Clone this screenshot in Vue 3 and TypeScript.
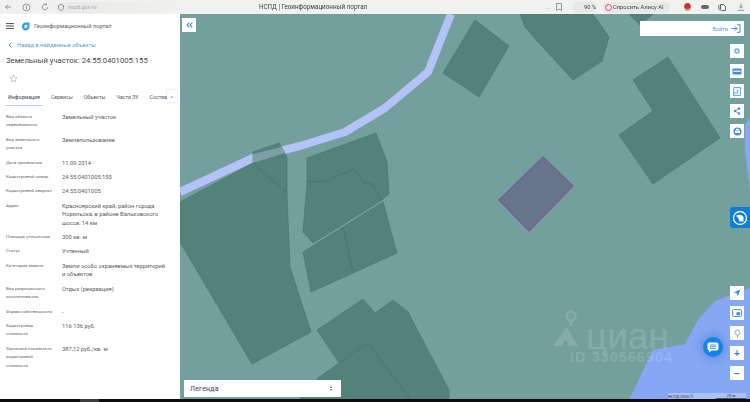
<script setup lang="ts">
const tabs = ['Информация', 'Сервисы', 'Объекты', 'Части ЗУ', 'Состав'];

// переносы строк как на исходном экране
const rows: Array<{ label: string; value: string }> = [
  { label: 'Вид объекта\nнедвижимости', value: 'Земельный участок' },
  { label: 'Вид земельного\nучастка', value: 'Землепользование' },
  { label: 'Дата присвоения', value: '11.09.2014' },
  { label: 'Кадастровый номер', value: '24:55:0401005:155' },
  { label: 'Кадастровый квартал', value: '24:55:0401005' },
  { label: 'Адрес', value: 'Красноярский край, район города\nНорильска, в районе Вальковского\nшоссе, 14 км' },
  { label: 'Площадь уточненная', value: '300 кв. м' },
  { label: 'Статус', value: 'Учтенный' },
  { label: 'Категория земель', value: 'Земли особо охраняемых территорий\nи объектов' },
  { label: 'Вид разрешенного\nиспользования', value: 'Отдых (рекреация)' },
  { label: 'Форма собственности', value: '-' },
  { label: 'Кадастровая\nстоимость', value: '116 136 руб.' },
  { label: 'Удельный показатель\nкадастровой\nстоимости', value: '387,12 руб./кв. м' },
];

const plots = [
  '180,202 253,163 287,193 290,267 311,332 252,364 180,242',
  '253,152 279,143 287,157 287,193 253,163',
  '307,158 376,133 387,162 389,194 382,200 372,184 365,184 353,169 327,181 307,182',
  '307,182 327,181 353,169 365,184 372,184 382,200 313,243 303,232',
  '343,227 383,202 397,253 353,273',
  '303,252 343,227 353,273 311,292',
  '317,330 363,299 375,313 393,300 408,312 449,390 449,402 412,402 368,343 339,363',
  '339,363 368,343 412,402 297,402 318,378',
  '475,20 509,46 479,97 443,73',
  '520,14 593,14 609,37 602,61 573,80 538,42 525,27',
  '629,14 653,14 640,25',
  '668,57 720,138 653,184 619,135 653,111 633,80',
];
</script>

<template>
  <div class="page">
    <header class="browser">
      <div class="browser-left">
        <svg width="8" height="8" viewBox="0 0 8 8"><path d="M7 4H1.500M4 1.500 1.500 4 4 6.500" class="ico-grey" /></svg>
        <svg width="9" height="9" viewBox="0 0 9 9"><circle cx="4.500" cy="4.500" r="3.500" class="ico-grey" /><path d="M4.500 2.500v4" class="ico-grey" /></svg>
        <svg width="8" height="8" viewBox="0 0 8 8"><path d="M6.800 4A2.800 2.800 0 1 1 5.500 1.600M5.500 .3v1.600H3.900" class="ico-grey" /></svg>
        <div class="address">
          <svg width="6" height="7" viewBox="0 0 6 7"><path d="M3 .5 5.500 1.500V4C5.500 5.300 4 6.200 3 6.500 2 6.200 .5 5.300 .5 4V1.500Z" class="ico-grey" /></svg>
          <span>nspd.gov.ru</span>
        </div>
      </div>
      <div class="browser-title">НСПД | Геоинформационный портал</div>
      <div class="browser-right">
        <span class="dots">···</span>
        <svg width="6" height="8" viewBox="0 0 6 8"><path d="M.5 .5h5v7L3 6 .5 7.500Z" class="ico-grey" /></svg>
        <div class="pill zoom-pill">
          <svg width="7" height="7" viewBox="0 0 7 7"><circle cx="4" cy="3" r="2.300" class="ico-dark" /><path d="M2.400 4.700.6 6.500" class="ico-dark" /></svg>
          <span>90 %</span>
        </div>
        <div class="pill alice-pill">
          <span class="alice-ring"></span>
          <span>Спросить Алису AI</span>
        </div>
        <span class="ext-red"></span>
        <span class="ext-dark"></span>
        <svg width="8" height="8" viewBox="0 0 8 8"><path d="M2.500 1.500h3l2 2v4h-4l-1-1zM.8 2v4l1.500 1.300" class="ico-dark" /></svg>
        <svg width="8" height="8" viewBox="0 0 8 8"><path d="M4 .5v4.500M2.200 3.400 4 5.200 5.800 3.400M1 7.300h6" class="ico-grey" /></svg>
      </div>
    </header>

    <main class="main">
      <aside class="panel">
        <div class="panel-head">
          <svg width="8" height="6" viewBox="0 0 8 6"><path d="M0 .6h8M0 3h8M0 5.400h8" stroke="#4a4f55" stroke-width="1" fill="none" /></svg>
          <svg width="9" height="9" viewBox="0 0 9 9">
            <path d="M1 4.500 C1 2 2.800 .6 5 .6H8.500V4.500C8.500 6.800 6.800 8.500 4.700 8.500 2.600 8.500 1 6.800 1 4.500Z" fill="#2aa3dc" />
            <path d="M3.200 4.500C3.200 3.400 4 2.800 5 2.800H6.500V4.500C6.500 5.500 5.800 6.200 4.800 6.200S3.200 5.500 3.200 4.500Z" fill="#d9f0fa" />
          </svg>
          <span class="portal">Геоинформационный портал</span>
        </div>

        <a class="back">
          <svg width="4" height="6" viewBox="0 0 4 6"><path d="M3.300 .7 1 3 3.300 5.300" stroke="#3f8fd6" stroke-width="1" fill="none" /></svg>
          <span>Назад в найденные объекты</span>
        </a>

        <h1 class="title">Земельный участок: 24:55:0401005:155</h1>

        <svg class="star" width="9" height="9" viewBox="0 0 9 9">
          <path d="M4.500 .8 5.600 3.200 8.200 3.500 6.300 5.300 6.800 7.900 4.500 6.600 2.200 7.900 2.700 5.300 .8 3.500 3.400 3.200Z" stroke="#a9adb1" stroke-width=".7" fill="none" />
        </svg>

        <nav class="tabs">
          <span v-for="(tab, i) in tabs" :key="tab" class="tab" :class="{ active: i === 0 }">{{ tab }}</span>
          <span class="tab-more">▸</span>
        </nav>

        <dl class="props">
          <div v-for="row in rows" :key="row.label" class="prop">
            <dt>{{ row.label }}</dt>
            <dd>{{ row.value }}</dd>
          </div>
        </dl>
      </aside>

      <section class="map">
        <svg class="map-canvas" width="570" height="388" viewBox="180 14 570 388">
          <rect x="180" y="14" width="570" height="388" fill="#739f9d" />
          <path d="M750 117 745 125 745 150 750 192ZM628 402 653 350 685 344 698 320 715 301 750 288V402Z" fill="#86a8f4" />
          <path d="M180 192 253 158 300 146 345 132 385 108 428 72 451 14" fill="none" stroke="#b3c3f7" stroke-width="8" stroke-linejoin="round" />
          <polygon v-for="p in plots" :key="p" :points="p" fill="#4f7f76" fill-opacity=".92" stroke="#47736b" stroke-width=".6" />
          <polygon points="253,154 282,147 285,153 253,163" fill="#7d9ea5" />
          <polygon points="543,157 573,186 529,231 499,200" fill="#66748c" stroke="#7b5a9a" stroke-width="1.200" />
        </svg>

        <button class="collapse">
          <svg width="7" height="6" viewBox="0 0 7 6"><path d="M3.300 .6 1 3 3.300 5.400M6.300 .6 4 3 6.300 5.400" stroke="#3f8fd6" stroke-width="1.100" fill="none" /></svg>
        </button>

        <div class="login">
          <span>Войти</span>
          <svg width="10" height="9" viewBox="0 0 10 9"><path d="M.5 4.500H6M4 2.500l2 2-2 2M6 .7h3v7.600H6" stroke="#3f8fd6" stroke-width="1" fill="none" /></svg>
        </div>

        <div class="tools tools-top">
          <button class="tool"><svg width="8" height="8" viewBox="0 0 8 8"><circle cx="4" cy="4" r="2.800" fill="#7fb0de" /><circle cx="4" cy="4" r="1" fill="#fff" /></svg></button>
          <button class="tool"><svg width="10" height="7" viewBox="0 0 10 7"><rect x=".5" y=".5" width="9" height="6" rx="1" fill="#3f8fd6" /><rect x="1.500" y="2.500" width="7" height="1.500" fill="#d8e8f6" /></svg></button>
          <button class="tool"><svg width="8" height="9" viewBox="0 0 8 9"><path d="M.5 .5h7v8h-7zM.5 6h4V3" stroke="#5da0dc" stroke-width=".9" fill="#e6f0f9" /></svg></button>
          <button class="tool"><svg width="8" height="8" viewBox="0 0 8 8"><path d="M6 1.500 2 4 6 6.500" stroke="#3f8fd6" stroke-width=".8" fill="none" /><circle cx="6" cy="1.500" r="1.200" fill="#3f8fd6" /><circle cx="2" cy="4" r="1.200" fill="#3f8fd6" /><circle cx="6" cy="6.500" r="1.200" fill="#3f8fd6" /></svg></button>
          <button class="tool"><svg width="9" height="9" viewBox="0 0 9 9"><circle cx="4.500" cy="4.500" r="4" fill="#3f8fd6" /><rect x="2" y="3.500" width="5" height="2.500" fill="#fff" /><rect x="3" y="1.800" width="3" height="1.200" fill="#fff" /></svg></button>
        </div>

        <div class="tab-blue">
          <svg width="16" height="16" viewBox="0 0 16 16"><circle cx="8" cy="8" r="6.500" fill="#0d7ed9" stroke="#fff" stroke-width="1.300" /><path d="M4 6C6 4 10 4.500 11.500 7V11.500H7.500C7 9 6 7 4 6Z" fill="#fff" /></svg>
        </div>

        <div class="watermark">
          <svg class="wm-logo" width="26" height="40" viewBox="0 0 26 40">
            <circle cx="19" cy="6" r="4.500" fill="none" stroke="#fff" stroke-width="2.500" />
            <path d="M19 11 19 16" stroke="#fff" stroke-width="2.500" />
            <path d="M1 36 15 17 26 36 17 36 14 30 9 36Z" fill="#fff" />
          </svg>
          <span class="wm-name">циан</span>
          <div class="wm-id">ID 330566904</div>
        </div>

        <button class="chat">
          <svg width="12" height="11" viewBox="0 0 12 11"><path d="M2.500 .5h7a2 2 0 0 1 2 2v4a2 2 0 0 1-2 2H4.500L2 10.500V8.500A2 2 0 0 1 .5 6.500v-4a2 2 0 0 1 2-2Z" fill="#fff" /><path d="M3 3h6M3 4.700h6M3 6.400h6" stroke="#1186e4" stroke-width=".8" /></svg>
        </button>

        <div class="tools tools-bottom">
          <button class="tool"><svg width="8" height="8" viewBox="0 0 8 8"><path d="M7.500 .5 .7 3.300 3.700 4.300 4.700 7.300Z" fill="#3f8fd6" /></svg></button>
          <button class="tool"><svg width="10" height="8" viewBox="0 0 10 8"><rect x=".6" y=".6" width="8.800" height="6.800" rx=".8" stroke="#3f8fd6" stroke-width="1" fill="none" /><rect x="4.500" y="3.200" width="3.500" height="3" fill="#3f8fd6" /></svg></button>
          <button class="tool"><svg width="7" height="9" viewBox="0 0 7 9"><circle cx="3.500" cy="3.500" r="2.600" stroke="#7fb0de" stroke-width="1" fill="none" /><path d="M3.500 6v2.500" stroke="#7fb0de" stroke-width="1" /></svg></button>
          <button class="tool tool-sign">+</button>
          <button class="tool tool-sign">−</button>
        </div>

        <div class="attribution">
          <span>НСПД 2026 ©</span>
          <span class="scale">20 м</span>
        </div>

        <div class="legend">
          <span>Легенда</span>
          <span class="legend-arrows">
            <i class="up"></i>
            <i class="down"></i>
          </span>
        </div>
      </section>
    </main>
    <footer class="taskbar"><span class="taskbar-item"></span></footer>
  </div>
</template>

<style>
html,
body {
  margin: 0;
  overflow: hidden;
}
</style>

<style scoped>
.page {
  width: 750px;
  height: 402px;
  display: flex;
  flex-direction: column;
  font-family: Roboto, "Liberation Sans", sans-serif;
  color: #4a4f55;
  overflow: hidden;
  filter: blur(0.35px);
}
.ico-grey {
  fill: none;
  stroke: #8a8d8f;
  stroke-width: 0.9;
}
.ico-dark {
  fill: none;
  stroke: #55585a;
  stroke-width: 0.9;
}

.browser {
  height: 14px;
  flex: none;
  display: flex;
  align-items: center;
  background: #f1f1ef;
  position: relative;
}
.browser-left {
  display: flex;
  align-items: center;
  gap: 10px;
  padding-left: 4px;
  width: 259px;
  box-sizing: border-box;
}
.address {
  flex: 1;
  height: 11px;
  display: flex;
  align-items: center;
  gap: 4px;
  padding-left: 2px;
  border-radius: 6px 0 0 6px;
  background: linear-gradient(90deg, #e9e9e7, #f1f1ef 60%);
  font-size: 5.500px;
  color: #a4a6a8;
  margin-left: -3px;
}
.browser-title {
  width: 110px;
  font-size: 6.300px;
  white-space: nowrap;
  color: #3b3d3f;
}
.browser-right {
  flex: 1;
  display: flex;
  align-items: center;
  justify-content: flex-end;
  padding-right: 5px;
}
.dots {
  font-size: 6px;
  color: #999;
  margin-right: 5px;
}
.pill {
  flex: none;
  height: 11px;
  border-radius: 6px;
  background: #e8e8e6;
  display: flex;
  align-items: center;
  font-size: 5.800px;
  color: #444;
  white-space: nowrap;
  box-sizing: border-box;
}
.zoom-pill {
  width: 24px;
  margin-left: 10px;
  gap: 1px;
  padding-left: 2px;
}
.alice-pill {
  width: 67px;
  margin-left: 7px;
  gap: 1px;
  padding-left: 2px;
}
.alice-ring {
  width: 5px;
  height: 5px;
  border: 1.500px solid #e8447c;
  border-radius: 50%;
}
.ext-red {
  width: 7px;
  height: 8px;
  margin-left: 14px;
  border-radius: 50%;
  background: radial-gradient(circle at 50% 35%, #c8322a 45%, #c9a58e 60%);
}
.ext-dark {
  width: 8px;
  height: 4px;
  margin-left: 10px;
  border-radius: 2px;
  background: #66696b;
}
.browser-right svg:nth-last-child(2) {
  margin-left: 9px;
}
.browser-right svg:last-child {
  margin-left: 11px;
}

.main {
  flex: 1;
  min-height: 0;
  display: flex;
}
.panel {
  width: 180px;
  flex: none;
  box-sizing: border-box;
  padding: 7px 0 0 6px;
  background: #fff;
  display: flex;
  flex-direction: column;
  align-items: flex-start;
}
.panel-head {
  display: flex;
  align-items: center;
  height: 10px;
}
.panel-head svg:nth-child(2) {
  margin-left: 7px;
}
.portal {
  margin-left: 4px;
  font-size: 5.700px;
  color: #585c60;
}
.back {
  display: flex;
  align-items: center;
  gap: 5px;
  margin: 11px 0 0 2px;
  font-size: 5.800px;
  color: #5b9bd8;
}
.title {
  margin: 7px 0 0;
  font-size: 7.700px;
  line-height: 12px;
  font-weight: 400;
  color: #44484c;
  white-space: nowrap;
}
.star {
  margin: 7px 0 0 3px;
}
.tabs {
  display: flex;
  align-items: center;
  width: 172px;
  height: 15px;
  margin-top: 6px;
  position: relative;
  font-size: 5.200px;
  color: #55595d;
}
.tab {
  margin-right: 11px;
  white-space: nowrap;
}
.tab:first-child {
  margin-left: 2px;
}
.tab.active {
  color: #3d4145;
  position: relative;
}
.tab.active::after {
  content: "";
  position: absolute;
  left: -3px;
  right: -3px;
  top: 11px;
  height: 1px;
  background: #b7d4ee;
}
.tab-more {
  position: absolute;
  left: 161px;
  top: 1px;
  width: 10px;
  height: 12px;
  background: #fff;
  box-shadow: 0 0 2px rgba(0, 0, 0, 0.2);
  display: flex;
  align-items: center;
  justify-content: center;
  font-size: 4px;
  color: #3f8fd6;
}
.props {
  margin: 9px 0 0;
  width: 168px;
  display: flex;
  flex-direction: column;
  gap: 6px;
}
.prop {
  display: grid;
  grid-template-columns: 56px 1fr;
}
.prop dt {
  font-size: 4.400px;
  line-height: 8.400px;
  color: #65696d;
  white-space: pre-line;
}
.prop dd {
  margin: 0;
  font-size: 5.800px;
  line-height: 8.400px;
  color: #585c60;
  white-space: pre-line;
}

.map {
  flex: 1;
  position: relative;
  overflow: hidden;
  background: #739f9d;
}
.map-canvas {
  position: absolute;
  left: 0;
  top: 0;
}
button {
  border: 0;
  padding: 0;
  background: #fff;
  display: flex;
  align-items: center;
  justify-content: center;
}
.collapse {
  position: absolute;
  left: 2px;
  top: 4px;
  width: 14px;
  height: 14px;
}
.login {
  position: absolute;
  right: 6px;
  top: 7px;
  width: 104px;
  height: 15px;
  box-sizing: border-box;
  padding-right: 3px;
  background: #fff;
  display: flex;
  align-items: center;
  justify-content: flex-end;
  gap: 3px;
  font-size: 5.500px;
  color: #5b9bd8;
}
.tools {
  position: absolute;
  right: 6px;
  display: flex;
  flex-direction: column;
  gap: 6px;
}
.tools-top {
  top: 30px;
}
.tools-bottom {
  top: 272px;
}
.tool {
  width: 14px;
  height: 14px;
}
.tool-sign {
  font-family: "Liberation Sans", sans-serif;
  font-size: 10px;
  font-weight: 700;
  color: #3f7fc0;
}
.tab-blue {
  position: absolute;
  right: 0;
  top: 193px;
  width: 20px;
  height: 21px;
  box-sizing: border-box;
  padding-left: 2px;
  background: #0d7ed9;
  border-radius: 3px 0 0 3px;
  display: flex;
  align-items: center;
}
/* водяной знак лежит поверх карты */
.watermark {
  position: absolute;
  left: 372px;
  top: 296px;
  width: 135px;
  height: 56px;
  color: #fff;
  opacity: 0.13;
}
.wm-logo {
  position: absolute;
  left: 0;
  top: 0;
}
.wm-name {
  position: absolute;
  left: 34px;
  top: 12px;
  font-family: "Liberation Sans", sans-serif;
  font-size: 37px;
  line-height: 30px;
}
.wm-id {
  position: absolute;
  left: 18px;
  top: 40px;
  font-family: "Liberation Sans", sans-serif;
  font-size: 14.500px;
  font-weight: 700;
  letter-spacing: 1px;
  line-height: 15px;
  white-space: nowrap;
}
.chat {
  position: absolute;
  left: 523px;
  top: 323px;
  width: 20px;
  height: 20px;
  border-radius: 50%;
  background: #1186e4;
  box-shadow: 0 0 10px 3px rgba(40, 90, 190, 0.3);
}
.attribution {
  position: absolute;
  right: 4px;
  bottom: 0;
  height: 6px;
  width: 78px;
  display: flex;
  justify-content: space-between;
  align-items: center;
  background: rgba(255, 255, 255, 0.3);
  font-size: 4px;
  color: #333;
}
.scale {
  width: 30px;
  text-align: center;
  border-bottom: 1px solid #555;
}
.legend {
  position: absolute;
  left: 4px;
  bottom: 2px;
  width: 157px;
  height: 17px;
  box-sizing: border-box;
  padding: 0 9px 0 6px;
  background: #fff;
  display: flex;
  align-items: center;
  justify-content: space-between;
  font-size: 7px;
  letter-spacing: 0.2px;
  color: #3e4246;
}
.legend-arrows {
  display: flex;
  flex-direction: column;
  gap: 1.500px;
}
.legend-arrows i {
  width: 0;
  height: 0;
  border-left: 1.500px solid transparent;
  border-right: 1.500px solid transparent;
}
.legend-arrows .up {
  border-bottom: 2px solid #555;
}
.legend-arrows .down {
  border-top: 2px solid #555;
}
.taskbar {
  height: 3px;
  flex: none;
  background: #0c0c0e;
  position: relative;
}
.taskbar-item {
  position: absolute;
  left: 80px;
  top: 0;
  width: 19px;
  height: 3px;
  background: #3c3c3e;
}
</style>
